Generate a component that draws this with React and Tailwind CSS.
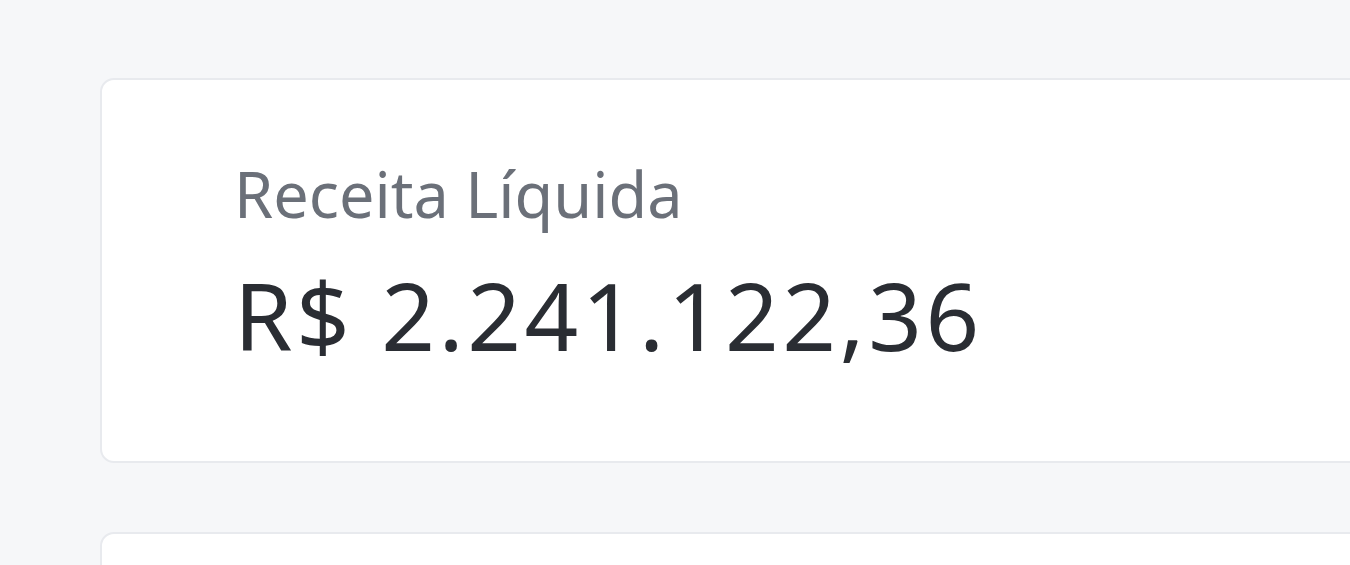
export default function App() {
  return (
    <div className="w-[1350px] h-[565px] overflow-hidden bg-[#f6f7f9] pl-[100px] pt-[78px] flex flex-col gap-[69px]" style={{ fontFamily: '"Noto Sans", "Open Sans", sans-serif' }}>
      <div className="w-[1400px] h-[385px] shrink-0 bg-white rounded-[14px] border-2 border-[#e8eaee] pl-[132px] pt-[76px]">
        <div className="text-[63px] leading-[76px] text-[#6b7079]">Receita Líquida</div>
        <div className="text-[94px] leading-[120px] tracking-[3.5px] text-[#2a2d33] mt-[23px]">R$ 2.241.122,36</div>
      </div>
      <div className="w-[1400px] h-[385px] shrink-0 bg-white rounded-[14px] border-2 border-[#e8eaee]"></div>
    </div>
  );
}
